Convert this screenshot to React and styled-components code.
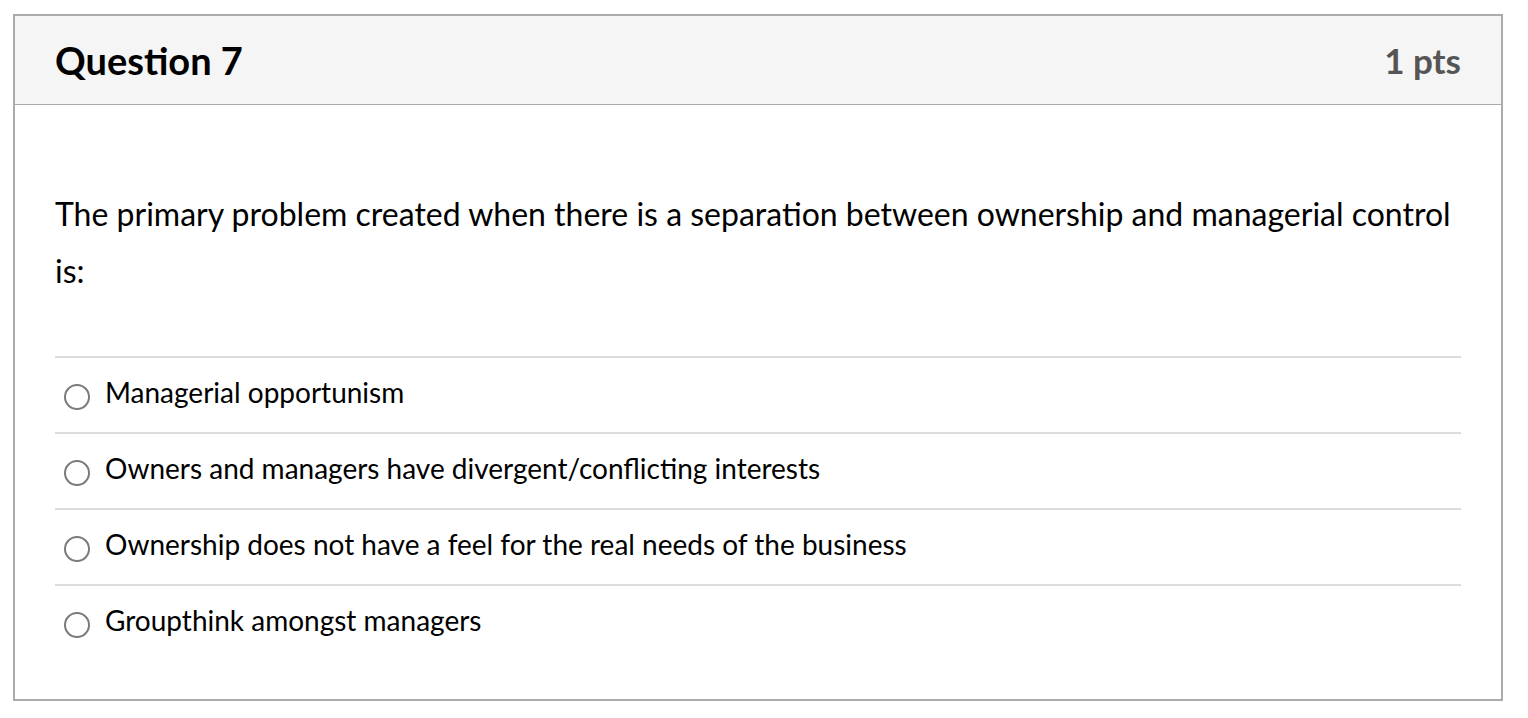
import React from "react";
import styled, { createGlobalStyle } from "styled-components";

const Global = createGlobalStyle`
  html, body { margin: 0; padding: 0; background: #fff; }
  body { font-family: Lato, "Noto Sans", sans-serif; color: #000; }
`;

const Page = styled.div`
  padding: 14px 0 0 13px;
`;

const Card = styled.section`
  width: 1490px;
  box-sizing: border-box;
  border: 2px solid #ababab;
  background: #fff;
`;

const Header = styled.header`
  height: 89px;
  box-sizing: border-box;
  background: #f5f5f5;
  border-bottom: 1px solid #ababab;
  display: flex;
  align-items: center;
  justify-content: space-between;
  padding: 0 40px;
`;

const Title = styled.h2`
  margin: 0;
  font-size: 38px;
  font-weight: 700;
  color: #000;
`;

const Points = styled.span`
  font-size: 35px;
  font-weight: 700;
  color: #555;
`;

const Body = styled.div`
  padding: 80px 40px 39px;
`;

const QuestionText = styled.p`
  margin: 0 0 57px;
  font-size: 32px;
  line-height: 57px;
  color: #000;
`;

const Answers = styled.ul`
  list-style: none;
  margin: 0;
  padding: 0;
`;

const Answer = styled.li`
  height: 76px;
  box-sizing: border-box;
  border-top: 2px solid #dcdcdc;
  display: flex;
  align-items: center;
  padding: 0 0 6px 9px;
  gap: 15px;
  font-size: 28px;
  color: #000;
`;

const Radio = styled.span`
  width: 22px;
  height: 22px;
  border-radius: 50%;
  border: 2px solid #7a7a7a;
  flex: none;
  margin-top: 9px;
`;

const answers = [
  "Managerial opportunism",
  "Owners and managers have divergent/conflicting interests",
  "Ownership does not have a feel for the real needs of the business",
  "Groupthink amongst managers",
];

export default function App() {
  return (
    <Page>
      <Global />
      <Card>
        <Header>
          <Title>Question 7</Title>
          <Points>1 pts</Points>
        </Header>
        <Body>
          <QuestionText>
            The primary problem created when there is a separation between
            ownership and managerial control is:
          </QuestionText>
          <Answers>
            {answers.map((a) => (
              <Answer key={a}>
                <Radio />
                <span>{a}</span>
              </Answer>
            ))}
          </Answers>
        </Body>
      </Card>
    </Page>
  );
}
